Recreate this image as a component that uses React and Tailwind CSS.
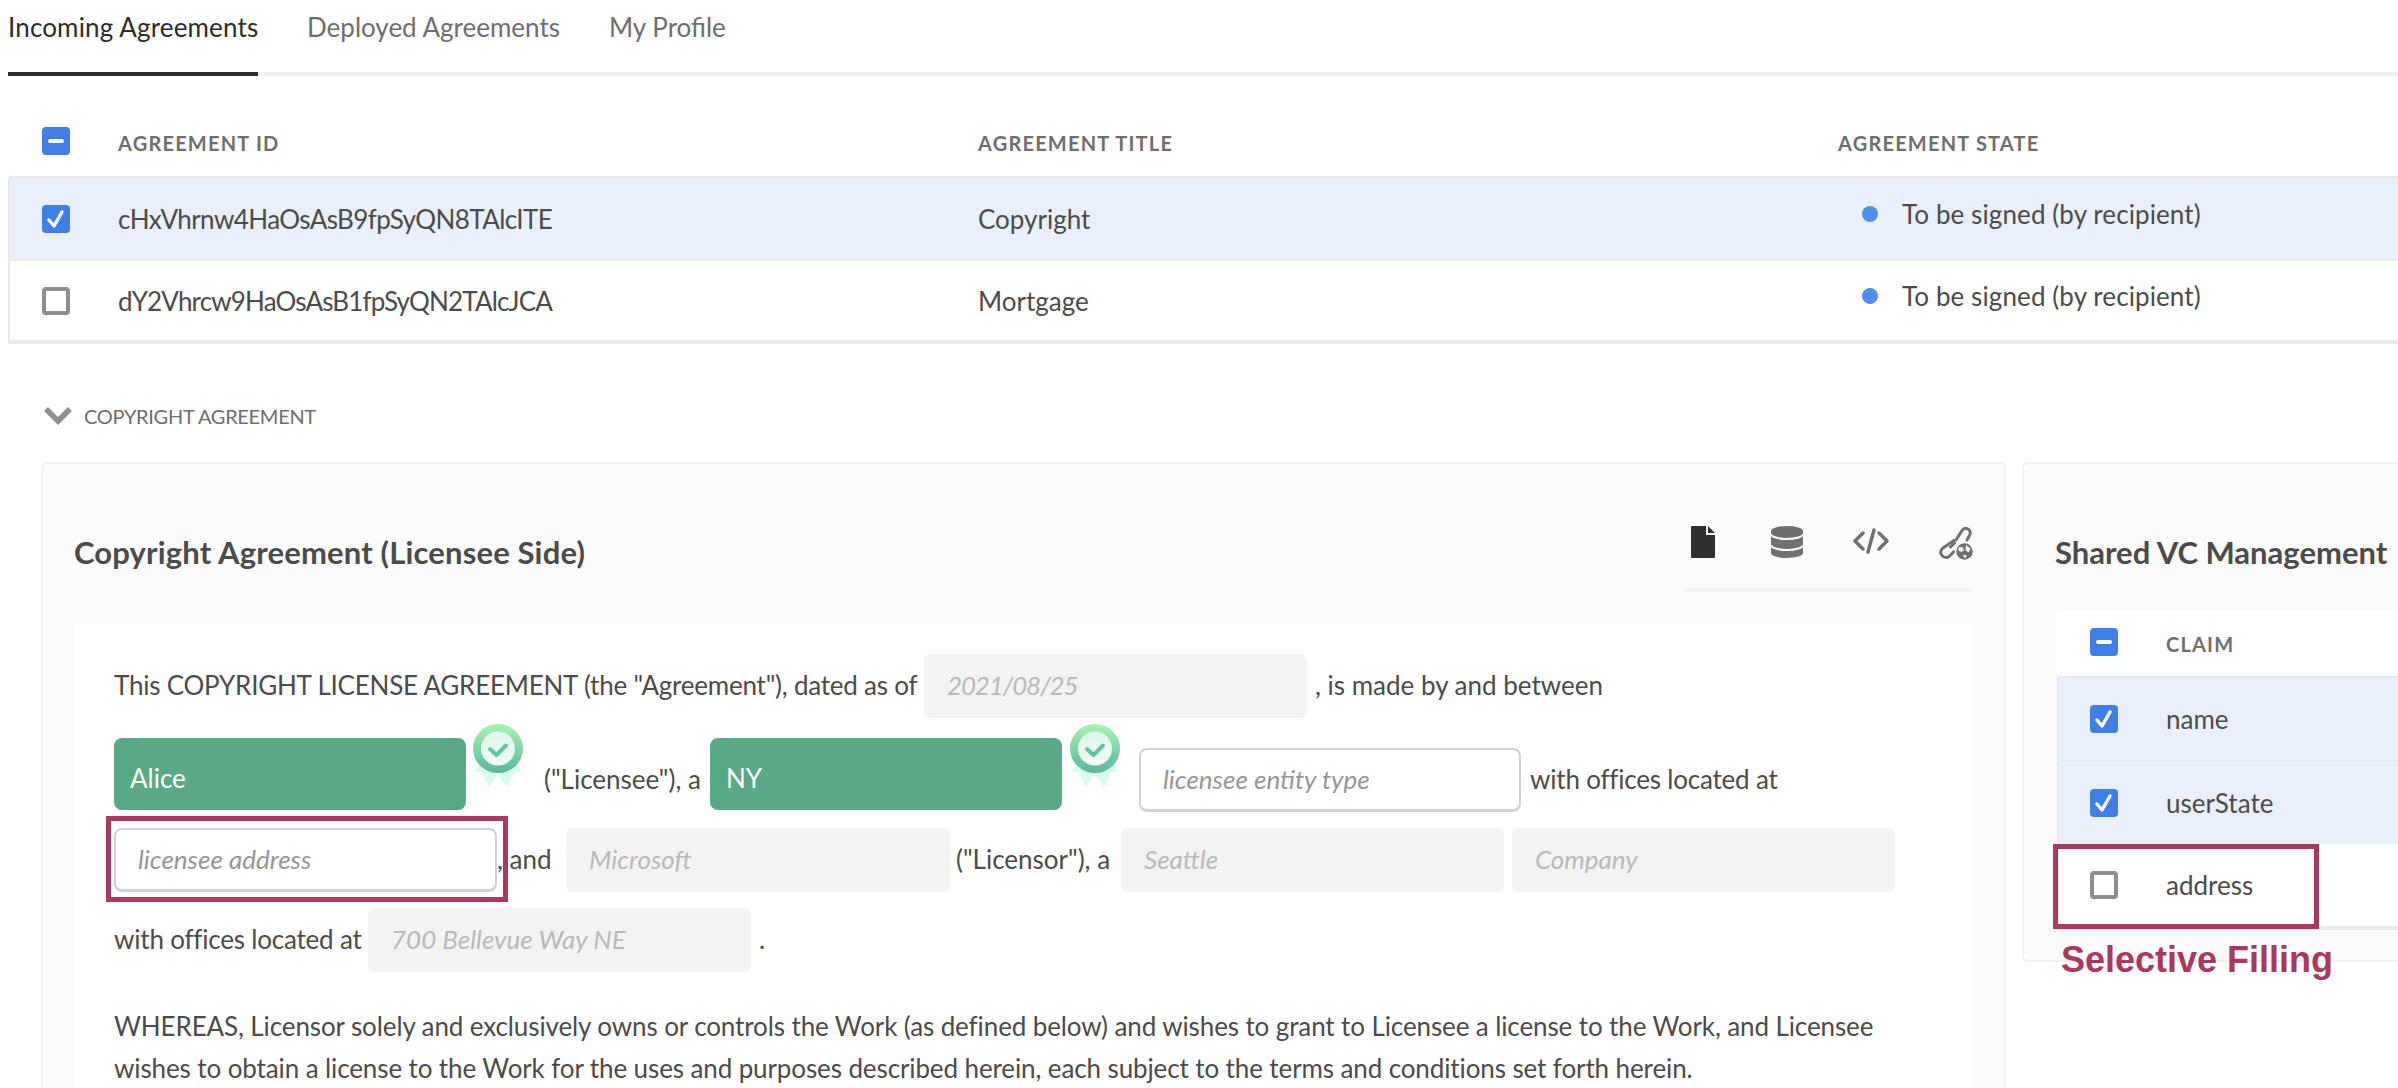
import { useId } from 'react';

const LINE = 'bg-[#eaeaea]';

function Checkbox({ state }) {
  if (state === 'off') {
    return <span className="block w-7 h-7 rounded-[4px] border-[4px] border-[#8e8e8e] bg-white" />;
  }
  return (
    <span className="flex items-center justify-center w-7 h-7 rounded-[4px] bg-[#4080e6]">
      {state === 'mixed' ? (
        <span className="block w-4 h-1 rounded-sm bg-white" />
      ) : (
        <svg width="18" height="20" viewBox="0 0 18 20" fill="none">
          <path d="M2 11l5 6L15 3" stroke="#fff" strokeWidth="3.4" strokeLinecap="round" strokeLinejoin="round" />
        </svg>
      )}
    </span>
  );
}

function Badge() {
  const id = useId();
  return (
    <svg width="50" height="64" viewBox="0 0 50 64" className="shrink-0">
      <defs>
        <linearGradient id={`${id}a`} x1="0" y1="0" x2="0" y2="1">
          <stop offset="0" stopColor="#a9f3b4" />
          <stop offset="1" stopColor="#58b79a" />
        </linearGradient>
        <linearGradient id={`${id}b`} x1="0" y1="0" x2="0" y2="1">
          <stop offset="0" stopColor="#def6ea" />
          <stop offset="1" stopColor="#f0fbf7" />
        </linearGradient>
      </defs>
      <path d="M8 38L2 47l7 2 7 14 9-13 9 13 7-14 7-2-6-9z" fill="#d9fbee" />
      <ellipse cx="25" cy="24.500" rx="25" ry="24.500" fill={`url(#${id}a)`} />
      <circle cx="25" cy="24.500" r="17" fill={`url(#${id}b)`} />
      <path d="M17 25l6.500 6L33 21.500" fill="none" stroke="#62c4a0" strokeWidth="4" strokeLinecap="round" strokeLinejoin="round" />
    </svg>
  );
}

function Field({ w, text, kind = 'off', className = '' }) {
  if (kind === 'done') {
    return (
      <div style={{ width: w }} className="h-[72px] pt-[7px] px-4 mb-[2px] rounded-lg bg-[#5aa986] text-white flex items-center shrink-0">
        {text}
      </div>
    );
  }
  const look = kind === 'open'
    ? 'bg-white border-2 border-b-[3px] border-[#d2d2d2] rounded-lg text-[#969696] pl-[22px]'
    : 'bg-[#f3f3f3] rounded-md text-[#b9b9b9] pl-[23px]';
  return (
    <div style={{ width: w }} className={`h-16 pb-[2px] flex items-center italic shrink-0 ${look} ${className}`}>
      {text}
    </div>
  );
}

function Txt({ w, className = '', children }) {
  return (
    <span style={{ width: w }} className={`block shrink-0 pb-[2px] whitespace-nowrap ${className}`}>
      {children}
    </span>
  );
}

function FileIcon() {
  return (
    <svg width="24" height="32" viewBox="0 0 24 32" fill="#2f2f2f">
      <path d="M0 1a1 1 0 011-1h14v9h9v22a1 1 0 01-1 1H1a1 1 0 01-1-1z" />
      <path d="M17 0l7 7h-7z" />
    </svg>
  );
}

function DbIcon() {
  return (
    <svg width="32" height="32" viewBox="0 0 32 32">
      <path d="M0 5a16 5 0 0132 0v22a16 5 0 01-32 0z" fill="#707070" />
      <path d="M0 8a16 5 0 0032 0M0 19a16 5 0 0032 0" fill="none" stroke="#fbfbfb" strokeWidth="2" />
    </svg>
  );
}

function CodeIcon() {
  return (
    <svg width="36" height="26" viewBox="0 0 36 26" fill="none" stroke="#707070" strokeWidth="3.400" strokeLinecap="round" strokeLinejoin="round">
      <path d="M10 5l-8 8 8 8M26 5l8 8-8 8M21 2l-6 22" />
    </svg>
  );
}

function LinkGlobeIcon() {
  return (
    <svg width="34" height="34" viewBox="0 0 34 34" fill="none" stroke="#707070" strokeWidth="3" strokeLinecap="round">
      <path d="M17 14l6-9.500a4.500 4.500 0 017.500 5L28 14" />
      <path d="M15 14.500L4 22a5 5 0 006 8.500l5-5" />
      <path d="M11.500 21l4-4" />
      <circle cx="25.500" cy="25.500" r="9" fill="#707070" stroke="#fbfbfb" strokeWidth="1.500" />
      <path d="M20 21l4 .5 1 3-3 1.500-3-2zM27 19l4.500 3.500-2 4-3-2.500zM24 29l4 .5-2 3z" fill="#fbfbfb" stroke="none" />
    </svg>
  );
}

function AgreementRow({ id, title, selected, height, idTracking }) {
  return (
    <div className={`grid grid-cols-[110px_860px_860px_1fr] items-center border-l-2 border-[#e8e8e8] ${height} ${selected ? 'bg-[#e9f0fb]' : 'bg-white'}`}>
      <span className="pl-[32px]"><Checkbox state={selected ? 'on' : 'off'} /></span>
      <span className={`-ml-[2px] ${idTracking}`}>{id}</span>
      <span className="-ml-[2px]">{title}</span>
      <span className="flex items-center gap-[24px] pl-[22px] -mt-[10px] tracking-[0.1px]">
        <span className="w-4 h-4 rounded-full bg-[#5090ea]" />
        To be signed (by recipient)
      </span>
    </div>
  );
}

function ClaimRow({ name, on }) {
  return (
    <div className={`flex items-center h-[82px] pl-[31px] border-l-2 border-[#e8e8e8] ${on ? 'bg-[#e9f0fb]' : 'bg-white'}`}>
      <span className="w-[76px]"><Checkbox state={on ? 'on' : 'off'} /></span>
      <span>{name}</span>
    </div>
  );
}

export default function App() {
  return (
    <div className="w-[2398px] h-[1088px] overflow-hidden bg-white text-[#4b4b4b] text-[26px] leading-[34px] [font-family:Lato,sans-serif]">
      {/* Tabs */}
      <div className="flex ml-2 h-[76px] border-b-4 border-[#f1f1f1] gap-[49px]">
        <div className="h-[76px] w-[250px] pt-[10px] border-b-4 border-[#2c2c2c] text-[#2c2c2c] whitespace-nowrap tracking-[0.15px]">Incoming Agreements</div>
        <div className="pt-[10px] text-[#6e6e6e] whitespace-nowrap">Deployed Agreements</div>
        <div className="pt-[10px] text-[#6e6e6e] whitespace-nowrap">My Profile</div>
      </div>

      {/* Agreements table */}
      <div className="ml-2">
        <div className="grid grid-cols-[110px_860px_860px_1fr] items-center h-[100px] pt-[34px] text-[20px] font-bold tracking-[1.2px] text-[#6e6e6e]">
          <span className="pl-[34px] -mt-[4px]"><Checkbox state="mixed" /></span>
          <span>AGREEMENT ID</span>
          <span>AGREEMENT TITLE</span>
          <span>AGREEMENT STATE</span>
        </div>
        <div className={`h-[3px] ${LINE} rounded-tl-md`} />
        <AgreementRow selected height="h-[80px]" idTracking="tracking-[-0.6px]" id="cHxVhrnw4HaOsAsB9fpSyQN8TAlcITE" title="Copyright" />
        <div className={`h-[2px] ${LINE}`} />
        <AgreementRow height="h-[79px]" idTracking="tracking-[-0.85px]" id="dY2Vhrcw9HaOsAsB1fpSyQN2TAlcJCA" title="Mortgage" />
        <div className={`h-1 ${LINE}`} />
      </div>

      {/* Section label */}
      <div className="flex items-center h-[34px] mt-[55px] ml-[44px] gap-3 text-[20px] tracking-[-0.3px] text-[#6e6e6e]">
        <svg width="28" height="18" viewBox="0 0 28 18" fill="none">
          <path d="M2 2l12 12L26 2" stroke="#8e8e8e" strokeWidth="5.500" />
        </svg>
        COPYRIGHT AGREEMENT
      </div>

      {/* Panels */}
      <div className="flex items-start gap-4 ml-[41px] mt-[29px]">
        <div className="w-[1965px] shrink-0 border-2 border-[#f1f1f1] rounded-md bg-[#fbfbfb] px-[31px]">
          <div className="flex justify-between h-[160px]">
            <h2 className="pt-[68px] text-[31px] leading-[40px] font-bold tracking-[0.15px]">Copyright Agreement (Licensee Side)</h2>
            <div className="flex items-start mt-[62px] pl-[6px] w-[288px] h-[66px] border-b-4 border-[#f3f3f3]">
              <FileIcon />
              <span className="ml-14"><DbIcon /></span>
              <span className="ml-[50px] mt-[2px]"><CodeIcon /></span>
              <span className="ml-[50px]"><LinkGlobeIcon /></span>
            </div>
          </div>

          {/* Agreement document */}
          <div className="bg-white h-[600px] pt-[30px] px-[40px] mr-[1px]">
            <div className="flex items-center h-16">
              <Txt w={810} className="tracking-[-0.22px]">This COPYRIGHT LICENSE AGREEMENT (the "Agreement"), dated as of</Txt>
              <Field w={383} text="2021/08/25" className="tracking-[-1.2px]" />
              <Txt w={300} className="ml-2">, is made by and between</Txt>
            </div>

            <div className="flex items-end h-[88px] mt-[6px]">
              <Field kind="done" w={352} text="Alice" />
              <span className="self-start ml-[7px]"><Badge /></span>
              <div className="flex items-center h-16">
                <Txt w={158} className="ml-[21px]">("Licensee"), a</Txt>
              </div>
              <span className="ml-2"><Field kind="done" w={352} text="NY" /></span>
              <span className="self-start ml-2"><Badge /></span>
              <span className="ml-[19px]"><Field kind="open" w={382} text="licensee entity type" /></span>
              <div className="flex items-center h-16">
                <Txt w={250} className="ml-[9px] tracking-[-0.2px]">with offices located at</Txt>
              </div>
            </div>

            <div className="flex items-center h-16 mt-4">
              <div className="relative">
                <Field kind="open" w={383} text="licensee address" />
                <span className="absolute -left-2 -top-3 w-[402px] h-[86px] border-[5px] border-[#a93a5e]" />
              </div>
              <Txt w={69}>, and</Txt>
              <Field w={384} text="Microsoft" />
              <Txt w={165} className="ml-[6px]">("Licensor"), a</Txt>
              <Field w={383} text="Seattle" />
              <span className="ml-2"><Field w={383} text="Company" /></span>
            </div>

            <div className="flex items-center h-16 mt-4">
              <Txt w={254} className="tracking-[-0.2px]">with offices located at</Txt>
              <Field w={383} text="700 Bellevue Way NE" />
              <Txt w={20} className="ml-2">.</Txt>
            </div>

            <p className="mt-[33px] leading-[42px] w-[1780px] tracking-[-0.11px]">
              WHEREAS, Licensor solely and exclusively owns or controls the Work (as defined below) and wishes to grant to Licensee a license to the Work, and Licensee wishes to obtain a license to the Work for the uses and purposes described herein, each subject to the terms and conditions set forth herein.
            </p>
          </div>
        </div>

        <div className="w-[400px] shrink-0 border-2 border-r-0 border-[#f1f1f1] rounded-l-md bg-[#fbfbfb] pl-[33px] pb-[30px]">
          <h2 className="-ml-[2px] pt-[68px] text-[31px] leading-[40px] font-bold whitespace-nowrap">Shared VC Management</h2>
          <div className="mt-[38px] h-[63px] bg-white flex items-center pl-[33px]">
            <span className="w-[76px]"><Checkbox state="mixed" /></span>
            <span className="text-[20px] font-bold tracking-[1.2px] text-[#6e6e6e] pt-1">CLAIM</span>
          </div>
          <div className={`mt-[3px] h-[2px] ${LINE}`} />
          <ClaimRow on name="name" />
          <div className={`h-[2px] ${LINE}`} />
          <ClaimRow on name="userState" />
          <div className="relative">
            <ClaimRow name="address" />
            <div className={`h-1 ${LINE}`} />
            <span className="absolute -left-1 top-0 w-[266px] h-[85px] border-[5px] border-[#a93a5e]" />
            <span className="absolute left-[4px] top-[96px] whitespace-nowrap [font-family:'Liberation_Sans',sans-serif] font-bold text-[36px] leading-[40px] text-[#a93a5e]">Selective Filling</span>
          </div>
        </div>
      </div>
    </div>
  );
}
